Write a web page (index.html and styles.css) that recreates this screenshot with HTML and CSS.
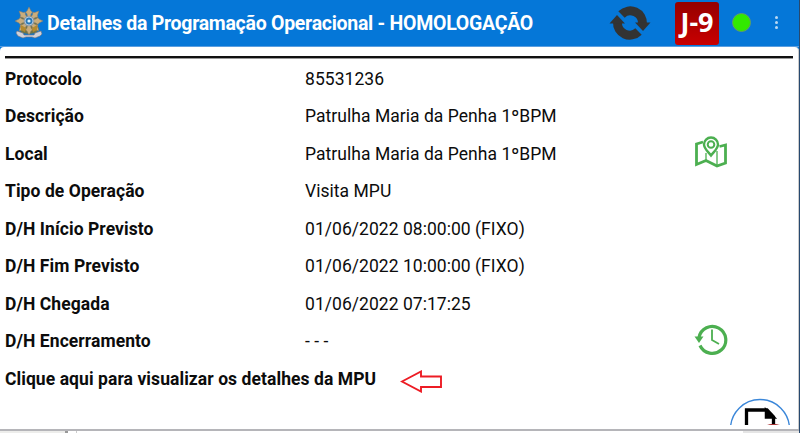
FILE: index.html
```html
<!DOCTYPE html>
<html lang="pt-BR">
<head>
<meta charset="utf-8">
<title>Detalhes da Programação Operacional</title>
<link rel="stylesheet" href="styles.css">
</head>
<body>
<div class="app">
  <header class="bar">
    <svg class="crest" viewBox="0 0 30 34">
      <path fill="#6f7448" d="M6 10l4 1 5-3 5 3 4-1-1 7 2 6-3 4-7 1-7-1-3-4 2-6z"/>
      <g fill="#c9ad7d" stroke="#857a68" stroke-width=".5">
        <path id="ray" d="M15 1l2 4 1.500 1-1.500 2-1 5h-2l-1-5-1.500-2L13 5z"/>
        <use href="#ray" transform="rotate(45 15 15)"/><use href="#ray" transform="rotate(90 15 15)"/>
        <use href="#ray" transform="rotate(135 15 15)"/><use href="#ray" transform="rotate(180 15 15)"/>
        <use href="#ray" transform="rotate(225 15 15)"/><use href="#ray" transform="rotate(270 15 15)"/>
        <use href="#ray" transform="rotate(315 15 15)"/>
      </g>
      <path fill="#b58a2e" d="M7 19l5 3-1 4-4-2zM23 19l-5 3 1 4 4-2z"/>
      <circle cx="15" cy="15" r="5.300" fill="#8996a5"/><circle cx="15" cy="15" r="4" fill="#2878b8" stroke="#cbd7df" stroke-width=".8"/>
      <circle cx="15" cy="15" r="1.600" fill="#d5f0ff"/>
      <path fill="#d0d1d8" stroke="#77747e" stroke-width=".6" d="M3 25l6 2 1 2h10l1-2 6-2 1 3-2 2-5 2-3-1h-6l-3 1-5-2-2-3z"/>
    </svg>
    <h1 class="title">Detalhes da Programação Operacional - HOMOLOGAÇÃO</h1>
    <svg class="sync" viewBox="0 0 42 36">
      <g id="turn"><path fill="none" stroke="#333" stroke-width="9" d="M12.500 9.500A12.300 12.300 0 0 1 33.500 19"/><path fill="#333" d="M26 17.500H41.500L34 26z"/></g>
      <use href="#turn" transform="rotate(180 21 18)"/>
    </svg>
    <span class="unit">J-9</span>
    <span class="status"></span>
    <span class="menu"><i></i><i></i><i></i></span>
  </header>
  <main class="panel">
    <dl class="rows">
      <div class="row"><dt>Protocolo</dt><dd>85531236</dd></div>
      <div class="row"><dt>Descrição</dt><dd>Patrulha Maria da Penha 1ºBPM</dd></div>
      <div class="row"><dt>Local</dt><dd>Patrulha Maria da Penha 1ºBPM</dd>
        <svg class="map" viewBox="0 0 34 34"><g fill="none" stroke="#4caf50" stroke-width="2.800"><path d="M9 6L2.500 8v20.500l9.500-4 11 5.500 8.500-3V9l-6 1.500"/><path stroke-width="1.300" d="M12 17v8M23 15v14.500"/><path stroke-width="2.400" d="M17 19.500c-3-4-7-7-7-11a7 7 0 0 1 14 0c0 4-4 7-7 11z"/><circle cx="17" cy="8.500" r="3.300" stroke-width="2"/></g></svg>
      </div>
      <div class="row"><dt>Tipo de Operação</dt><dd>Visita MPU</dd></div>
      <div class="row"><dt>D/H Início Previsto</dt><dd>01/06/2022 08:00:00 (FIXO)</dd></div>
      <div class="row"><dt>D/H Fim Previsto</dt><dd>01/06/2022 10:00:00 (FIXO)</dd></div>
      <div class="row"><dt>D/H Chegada</dt><dd>01/06/2022 07:17:25</dd></div>
      <div class="row"><dt>D/H Encerramento</dt><dd>- - -</dd>
        <svg class="history" viewBox="0 0 34 34"><g fill="none" stroke="#4caf50"><path stroke-width="3.200" d="M5 15.500A13.500 13.500 0 1 1 6 23.500"/><path stroke-width="1.800" d="M18 7.500V18l7 4"/></g><path fill="#4caf50" d="M.5 14.500h9L5 21z"/></svg>
      </div>
    </dl>
    <div class="link"><a class="details">Clique aqui para visualizar os detalhes da MPU</a>
      <svg class="arrow" viewBox="0 0 42 23"><path d="M2 11.500L21 1.500v5h20v10.500H21v4.500z" fill="none" stroke="#ed1c24" stroke-width="1.900"/></svg>
    </div>
    <svg class="fab" viewBox="0 0 62 27"><circle cx="31" cy="31" r="29.500" fill="#fff" stroke="#3b87d9" stroke-width="1.400"/><path d="M17.500 27V12H38l6.500 7V27" fill="none" stroke="#000" stroke-width="3.300"/><path d="M37 12v7.500h8z" stroke="#000" stroke-width="2.500"/><path d="M38 27c2-1.500 10-1.500 13 0z" fill="#a33"/></svg>
  </main>
  <footer class="edge"><span class="tab"></span><span class="tick"></span><span class="tail"></span></footer>
</div>
</body>
</html>
```
FILE: styles.css
```css
* { box-sizing: border-box; }
body { margin: 0; background: #fff; font-family: Roboto, sans-serif; color: #0c0c0c; }
.app { position: relative; width: 800px; height: 433px; overflow: hidden; background: #0577d8; border-right: 1px solid #27496f; }
.bar { display: flex; align-items: center; height: 47px; border-bottom: 1px solid #5b9ee0; }
.crest { width: 30px; height: 34px; margin-left: 14px; }
.title { width: 563px; margin: 0 0 0 3px; padding-top: 2px; font-size: 19.500px; letter-spacing: -.275px; font-weight: 700; color: #fff; white-space: nowrap; line-height: 46px; }
.sync { width: 42px; height: 36px; margin-left: -1px; flex: none; }
.unit { width: 44px; height: 43px; margin-left: 24px; border-radius: 3px; background: linear-gradient(#950000, #c90000); color: #fff; font: 700 27px/40px "Open Sans", sans-serif; text-align: center; flex: none; }
.status { width: 19px; height: 19px; margin: -1px 0 0 13px; border: 1px solid #629c68; border-radius: 50%; background: #32e900; flex: none; }
.menu { display: flex; flex-direction: column; gap: 2px; margin: -1px 0 0 24px; }
.menu i { width: 3px; height: 3px; border-radius: 50%; background: #b9d8f3; }
.panel { position: relative; height: 382px; padding: 9px 5px 0 5px; border-radius: 4px 4px 0 0; background: #fff; border-right: 1px solid #ccc; }
.rows { margin: 0; padding-top: 1px; border-top: 2px solid #111; box-shadow: inset 0 1px #999; }
.row { display: flex; align-items: center; height: 37.500px; font-size: 17.500px; }
dt { width: 300px; font-weight: 700; letter-spacing: .07px; padding-top: 2px; }
dd { width: 389px; margin: 0; padding-top: 2px; letter-spacing: .04px; }
.map, .history { width: 34px; height: 34px; flex: none; }
.history { margin-top: -2px; }
.link { display: flex; align-items: center; height: 37.500px; }
.details { width: 395px; padding-top: 2px; font-size: 17.500px; font-weight: 700; letter-spacing: .07px; white-space: nowrap; }
.arrow { width: 42px; height: 23px; margin-top: 7px; }
.fab { position: absolute; right: 7px; bottom: 4px; width: 62px; height: 27px; }
.edge { display: flex; height: 4px; background: #fff; border-top: 2px solid #b5b5b9; }
.tab { width: 68px; background: #ededeb; border-right: 3px solid #999; }
.tick { width: 9px; border-right: 1px solid #ccc; }
.tail { width: 56px; margin-left: auto; background: #e5e5e5; }
```
